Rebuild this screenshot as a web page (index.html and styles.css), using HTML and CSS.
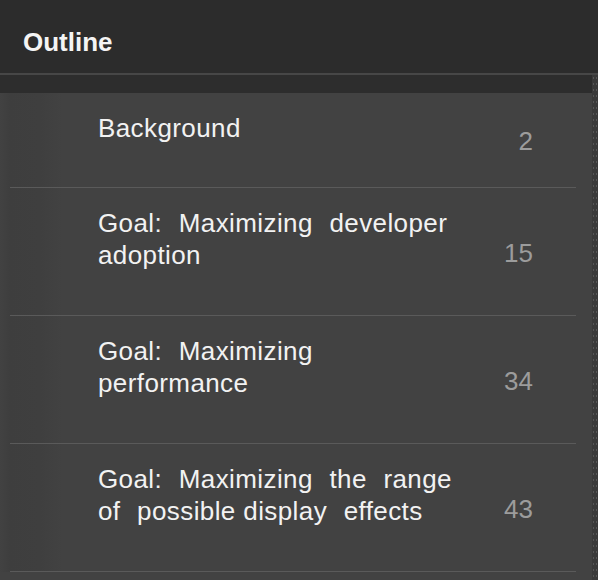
FILE: index.html
```html
<!DOCTYPE html>
<html>
<head>
<meta charset="utf-8">
<link rel="stylesheet" href="styles.css">
</head>
<body>
<div class="panel">
  <header class="header">Outline</header>
  <div class="body">
    <div class="scroller">
      <div class="topband"></div>
      <ul class="list">
        <li class="row first">
          <div class="title">Background</div>
          <div class="page">2</div>
        </li>
        <li class="row">
          <div class="title">Goal: Maximizing developer adoption</div>
          <div class="page">15</div>
        </li>
        <li class="row">
          <div class="title">Goal: Maximizing performance</div>
          <div class="page">34</div>
        </li>
        <li class="row">
          <div class="title">Goal: Maximizing the range of <span class="tight">possible display</span> effects</div>
          <div class="page">43</div>
        </li>
      </ul>
    </div>
    <div class="track"></div>
  </div>
</div>
</body>
</html>
```
FILE: styles.css
```css
html, body {
  margin: 0;
  padding: 0;
  width: 598px;
  height: 580px;
  overflow: hidden;
  background: #424242;
  font-family: "Liberation Sans", Arial, sans-serif;
}
.panel {
  display: flex;
  flex-direction: column;
  height: 580px;
}
.header {
  height: 75px;
  box-sizing: border-box;
  padding: 27px 0 0 23px;
  background: #2c2c2c;
  color: #f4f4f4;
  font-size: 26px;
  font-weight: bold;
  line-height: 30px;
  border-bottom: 2px solid #474747;
  flex: none;
}
.body {
  flex: 1;
  display: flex;
  min-height: 0;
}
.scroller {
  flex: 1;
  display: flex;
  flex-direction: column;
}
.topband {
  height: 18px;
  background: #2d2d2d;
  flex: none;
}
.track {
  width: 6px;
  background-color: #3a3a3a;
  background-image: radial-gradient(circle, #575757 0.8px, transparent 1px);
  background-size: 3px 6px;
}
.list {
  list-style: none;
  margin: 0;
  padding: 0 0 0 10px;
  width: 576px;
  box-sizing: border-box;
  background: linear-gradient(to right, #424242 0, #3e3e3e 10px, #3f3f3f 40px, #424242 62px);
}
.row {
  display: flex;
  align-items: center;
  height: 128px;
  box-sizing: border-box;
  border-bottom: 1px solid #5a5a5a;
  padding: 0 43px 0 88px;
}
.row.first {
  height: 95px;
}
.title {
  align-self: flex-start;
  margin-top: 19px;
  width: 356px;
  color: #f2f2f2;
  font-size: 26px;
  line-height: 32px;
  letter-spacing: 0.4px;
  word-spacing: 9px;
}
.tight {
  word-spacing: 0;
}
.page {
  margin-left: auto;
  margin-top: 2px;
  color: #9c9c9c;
  font-size: 26px;
  line-height: 32px;
}
```
